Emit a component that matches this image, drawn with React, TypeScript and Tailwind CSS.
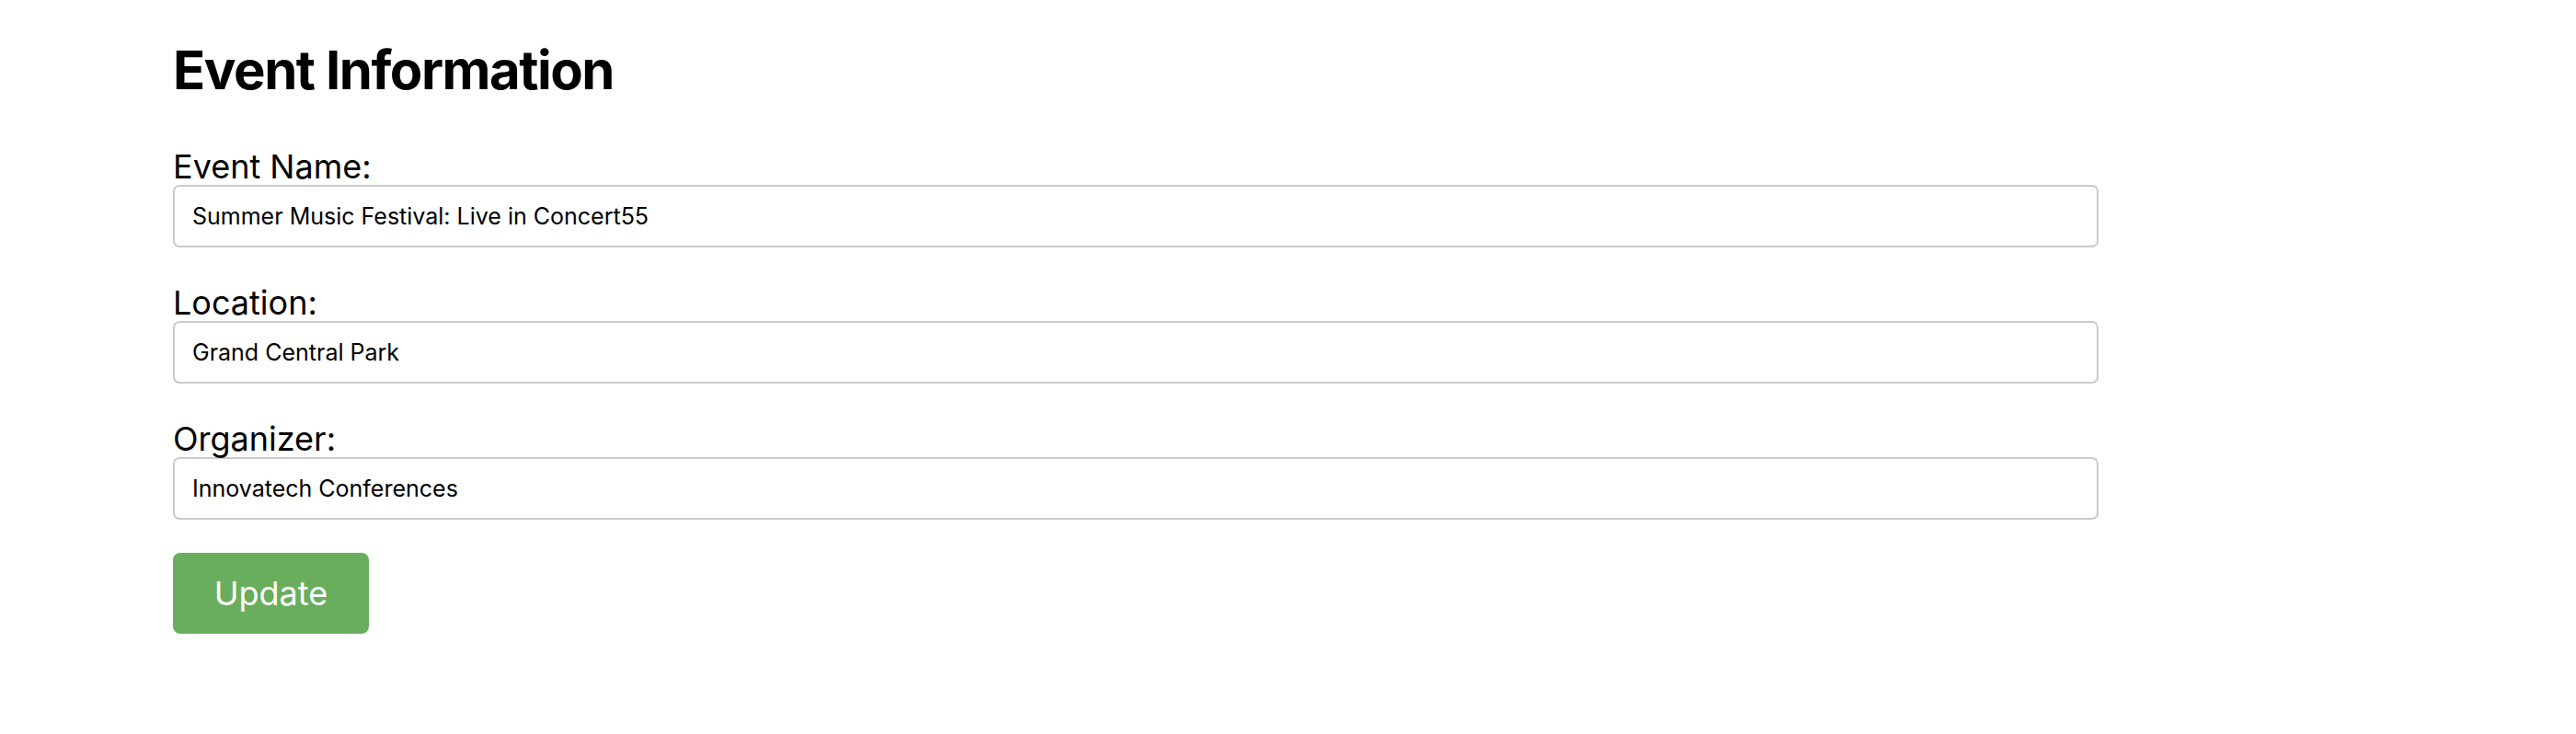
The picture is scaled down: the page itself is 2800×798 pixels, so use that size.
import React, { useState } from 'react';

const fields = [
  { id: 'name', label: 'Event Name:', value: 'Summer Music Festival: Live in Concert55' },
  { id: 'location', label: 'Location:', value: 'Grand Central Park' },
  { id: 'organizer', label: 'Organizer:', value: 'Innovatech Conferences' },
];

export default function App() {
  const [values, setValues] = useState<Record<string, string>>(
    Object.fromEntries(fields.map((f) => [f.id, f.value]))
  );

  return (
    <div className="min-h-screen bg-white font-['Inter',sans-serif] text-black">
      <div className="pl-[188px] pt-[42px] w-[2281px]">
        <h1 className="text-[58px] leading-[68px] font-bold tracking-[-0.025em] mb-[51px]">Event Information</h1>

        <form onSubmit={(e) => e.preventDefault()}>
          <div className="flex flex-col gap-[40px] mb-[36px]">
            {fields.map((f) => (
              <div key={f.id}>
                <label htmlFor={f.id} className="block text-[36px] leading-[40px]">
                  {f.label}
                </label>
                <input
                  id={f.id}
                  type="text"
                  value={values[f.id]}
                  onChange={(e) => setValues({ ...values, [f.id]: e.target.value })}
                  className="block w-full h-[68px] px-[19px] text-[25px] border-2 border-[#cbcbcb] rounded-[7px] outline-none"
                />
              </div>
            ))}
          </div>

          <button
            type="submit"
            className="block w-[213px] h-[88px] bg-[#69ae5d] text-white text-[36px] rounded-[8px]"
          >
            Update
          </button>
        </form>
      </div>
    </div>
  );
}
